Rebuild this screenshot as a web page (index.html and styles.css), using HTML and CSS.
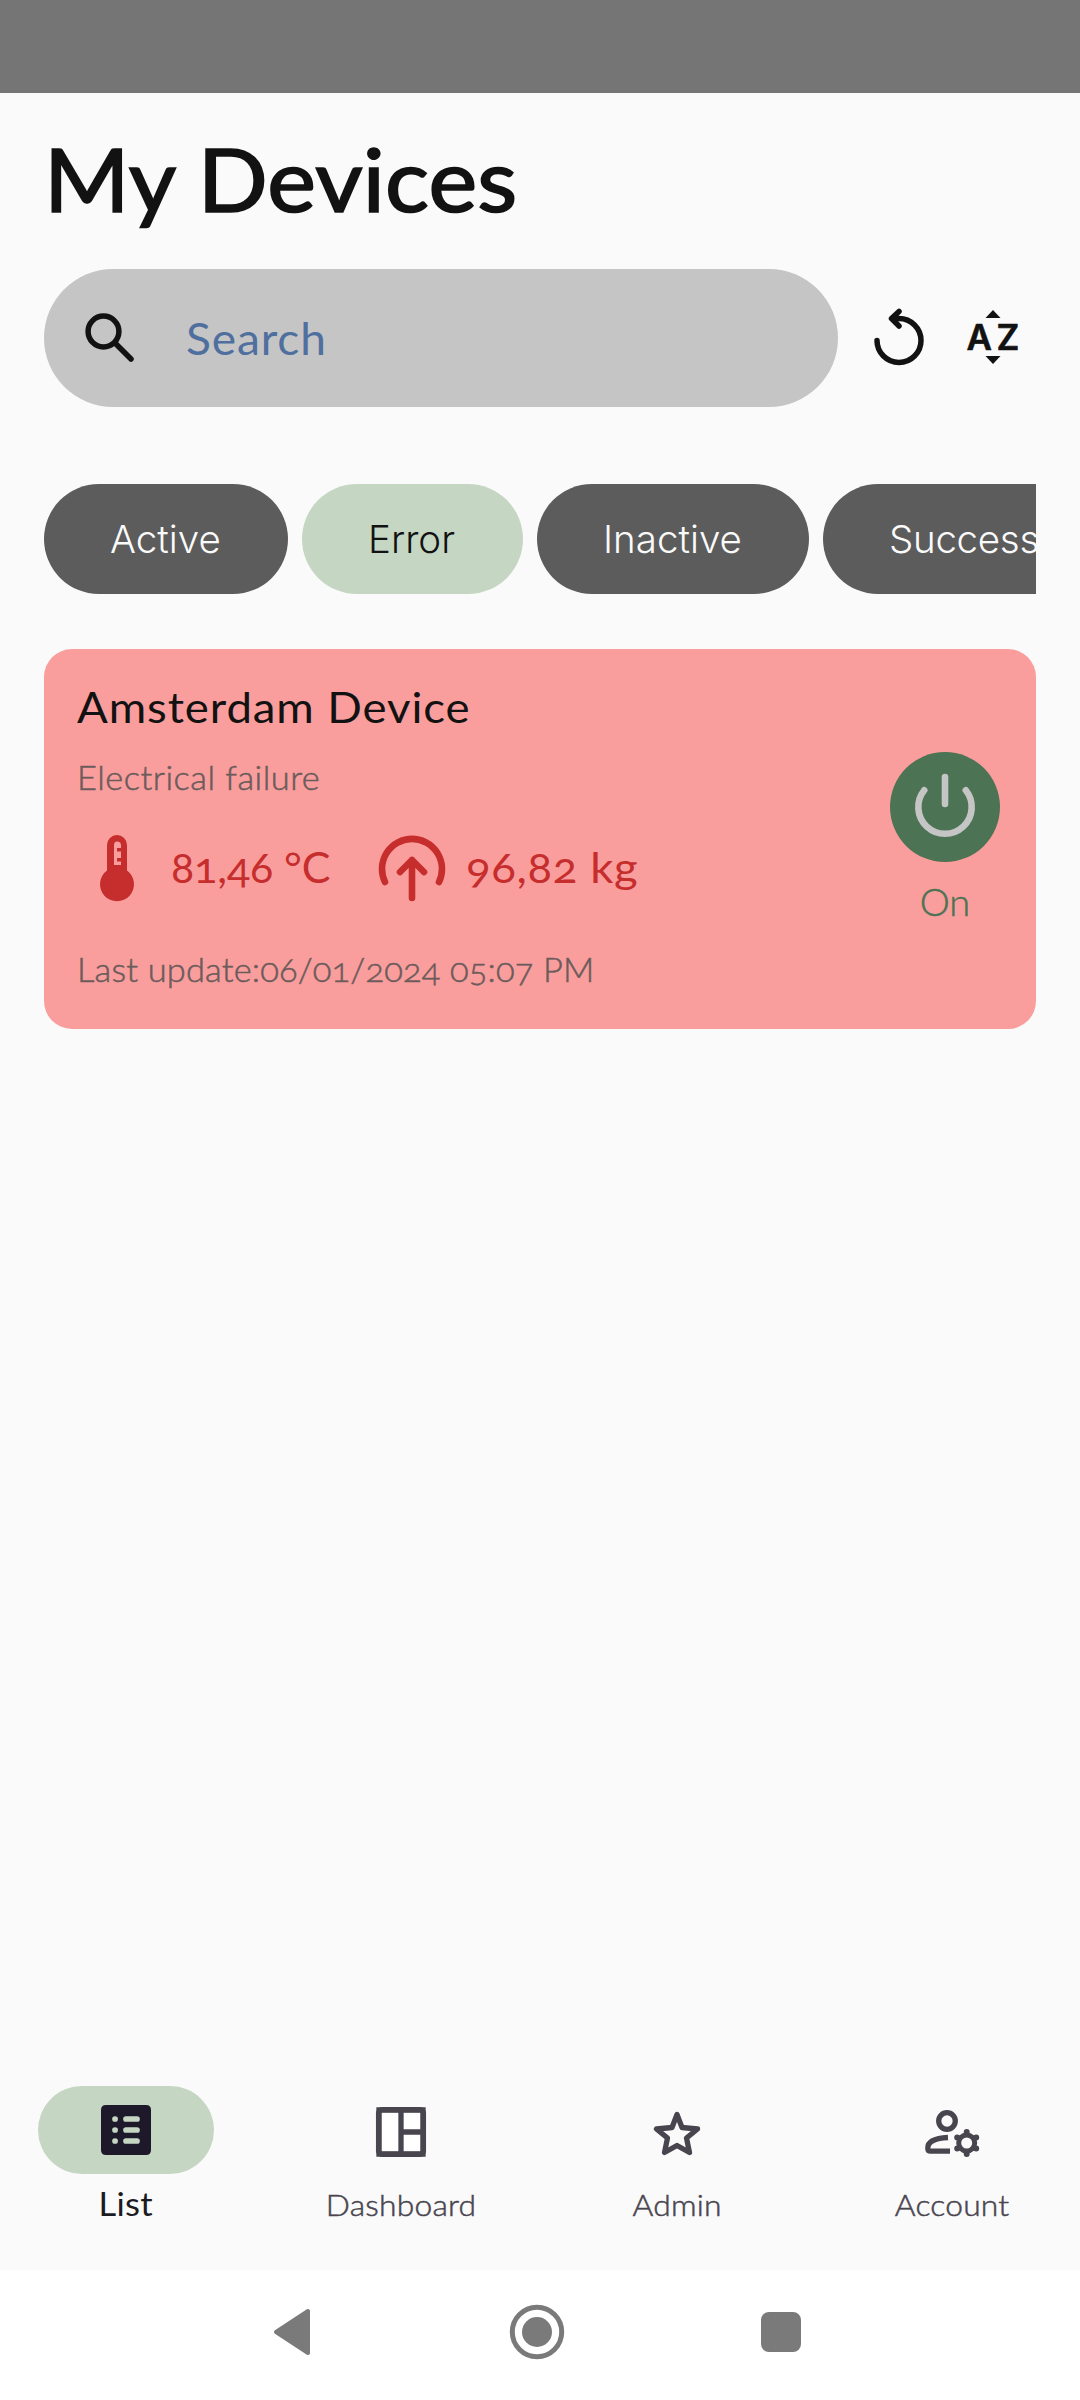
FILE: index.html
```html
<!DOCTYPE html>
<html lang="en">
<head>
<meta charset="utf-8">
<title>My Devices</title>
<link rel="stylesheet" href="styles.css">
</head>
<body>
<div class="screen">
  <div class="status-bar"></div>
  <main class="content">
    <h1 class="title">My Devices</h1>
    <div class="toolbar">
      <label class="search">
        <svg class="search-icon" viewBox="0 0 50 50"><circle cx="18.5" cy="18.5" r="15.4"/><path d="M30 30 46 46"/></svg>
        <span class="search-text">Search</span>
      </label>
      <svg class="refresh-icon" viewBox="0 0 52 60"><path d="M4 32.500A22 22 0 1 0 26 10.500H19M26 3.500 18.500 10.500 26 18"/></svg>
      <svg class="sort-icon" viewBox="0 0 56 60"><path d="M28 2 35.500 10H20.500ZM28 56 35.500 48H20.500Z"/><text x="1.500" y="42">A</text><text x="31.500" y="42">Z</text></svg>
    </div>
    <div class="chips">
      <span class="chip chip-active">Active</span>
      <span class="chip chip-error">Error</span>
      <span class="chip chip-inactive">Inactive</span>
      <span class="chip chip-success">Success</span>
    </div>
    <article class="card">
      <div class="info">
        <h2 class="device">Amsterdam Device</h2>
        <p class="reason">Electrical failure</p>
        <div class="metrics">
          <svg class="thermo-icon" viewBox="0 0 34 66"><path fill-rule="evenodd" d="M7 10a10 10 0 0 1 20 0V35.500A17 17 0 1 1 7 35.500ZM17 6.500q-3 0-3 4V30H21V26.500H17V23H21V16.500H17V13H21V10.500Q21 6.500 17 6.500Z"/></svg>
          <span class="temp">81,46 °C</span>
          <svg class="gauge-icon" viewBox="0 0 68 68"><path d="M7 48A30 30 0 1 1 61 48M34 64V26M22 38 34 26 46 38"/></svg>
          <span class="weight">96,82 kg</span>
        </div>
        <p class="updated">Last update:06/01/2024 05:07 PM</p>
      </div>
      <div class="switch">
        <svg class="power-icon" viewBox="0 0 110 110"><circle cx="55" cy="55" r="55"/><path d="M34.200 38.300A26.700 26.700 0 1 0 75.800 38.300M55 25V52"/></svg>
        <span class="state">On</span>
      </div>
    </article>
  </main>
  <nav class="tabs">
    <a class="tab tab-selected"><span class="pill"><svg class="tab-icon" viewBox="0 0 66 66"><path class="solid" fill-rule="evenodd" d="M13 8H53Q58 8 58 13V53Q58 58 53 58H13Q8 58 8 53V13Q8 8 13 8Z"/><path class="bullets" d="M22 22h.1M33 22H44M22 33h.1M33 33H44M22 44h.1M33 44H44"/></svg></span><span class="tab-label list-label">List</span></a>
    <a class="tab"><span class="pill"><svg class="tab-icon" viewBox="0 0 66 66"><path fill="#fff" d="M11 13H55V57H11Z"/><rect x="10.600" y="12.600" width="44.800" height="44.800" rx="3.500"/><path d="M33 12V58M33 35H55"/></svg></span><span class="tab-label dashboard-label">Dashboard</span></a>
    <a class="tab"><span class="pill"><svg class="tab-icon" viewBox="0 0 66 66"><path class="star" d="M33 17.500 38 30.500 53.500 32 42.500 41 45.500 55.500 33 48.500 20.500 55.500 23.500 41 12.500 32 28 30.500Z"/></svg></span><span class="tab-label admin-label">Admin</span></a>
    <a class="tab"><span class="pill"><svg class="tab-icon" viewBox="0 0 66 66"><circle cx="28" cy="24" r="8.300"/><path d="M29 40.500Q8.800 41.500 8.800 51Q8.800 54.200 11.500 54.200H31"/><circle class="gear-ring" cx="47.700" cy="46" r="8"/><path class="gear-teeth" d="M47.700 35v.1M57.200 40.500v.1M57.200 51.500v.1M47.700 57v.1M38.200 51.500v.1M38.200 40.500v.1"/></svg></span><span class="tab-label account-label">Account</span></a>
  </nav>
  <footer class="system-bar">
    <svg class="back" viewBox="0 0 38 48"><path d="M35 3V45L3 24Z"/></svg>
    <svg class="home" viewBox="0 0 56 56"><circle class="home-ring" cx="28" cy="28" r="24.700"/><circle cx="28" cy="28" r="15"/></svg>
    <span class="recent"></span>
  </footer>
</div>
</body>
</html>
```

FILE: styles.css
```css
* { box-sizing: border-box; margin: 0; padding: 0; }
body { font-family: Lato, "Noto Sans", sans-serif; color: #121212; background: #fafafa; }
svg { display: block; flex: none; overflow: visible; }
.screen { width: 1080px; height: 2400px; display: flex; flex-direction: column; background: #fafafa; overflow: hidden; }
.status-bar { height: 93px; flex: none; background: #757575; }
.content { flex: 1; padding: 34px 44px 0; }
.title, .search-text, .device, .reason, .updated, .weight { transform: scaleX(1.06); transform-origin: left center; }
.title { height: 104px; line-height: 104px; font-size: 87px; font-weight: 400; -webkit-text-stroke: 1.700px #121212; letter-spacing: .1px; white-space: nowrap; }
.toolbar { margin-top: 38px; height: 138px; display: flex; align-items: center; }
.search { width: 794px; height: 138px; border-radius: 69px; background: #c5c5c5; display: flex; align-items: center; padding-left: 41px; }
.search-icon { width: 50px; height: 50px; fill: none; stroke: #121212; stroke-width: 5.500; stroke-linecap: round; }
.search-text { margin-left: 51px; font-size: 43.500px; line-height: 54px; letter-spacing: .8px; color: #4f6f9f; }
.refresh-icon { width: 52px; height: 60px; margin-left: 35px; fill: none; stroke: #121212; stroke-width: 5.500; stroke-linecap: round; stroke-linejoin: round; }
.sort-icon { width: 56px; height: 60px; margin-left: 40px; fill: #121212; }
.sort-icon text { font: 600 35px Inter, sans-serif; stroke: #121212; stroke-width: .6; stroke-linejoin: round; }
.chips { margin-top: 77px; height: 110px; display: flex; gap: 14px; overflow: hidden; }
.chip { flex: none; height: 110px; border-radius: 55px; line-height: 110px; padding-left: 66px; background: #5c5c5c; color: #fafafa; font-family: Inter, sans-serif; font-weight: 300; font-size: 38.500px; white-space: nowrap; }
.chip-active { width: 244px; }
.chip-error { width: 221px; background: #c5d7c3; color: #121212; }
.chip-inactive { width: 272px; }
.chip-success { width: 277px; letter-spacing: -.3px; }
.card { margin-top: 55px; height: 380px; border-radius: 28px; background: #fa9e9d; display: flex; justify-content: space-between; padding: 31px 36px 0 33px; }
.device { height: 54px; line-height: 54px; font-size: 43px; font-weight: 400; letter-spacing: .85px; white-space: nowrap; }
.reason, .updated { height: 40px; line-height: 40px; font-size: 32.500px; font-weight: 300; -webkit-text-stroke: .5px #6c5b5b; color: #6c5b5b; white-space: nowrap; font-variant-numeric: oldstyle-nums; }
.reason { margin-top: 24px; letter-spacing: .45px; }
.metrics { margin-top: 37px; height: 66px; display: flex; align-items: center; color: #c62d2d; font-size: 43px; line-height: 54px; font-variant-numeric: oldstyle-nums; white-space: nowrap; }
.thermo-icon { width: 34px; height: 66px; margin-left: 23px; fill: #c62d2d; }
.temp { width: 207px; margin: -3px 0 0 37px; letter-spacing: -.1px; }
.gauge-icon { width: 68px; height: 68px; fill: none; stroke: #c62d2d; stroke-width: 6.600; stroke-linecap: round; stroke-linejoin: round; }
.weight { margin: -3px 0 0 20px; letter-spacing: .6px; }
.updated { margin-top: 49px; letter-spacing: .15px; }
.switch { width: 110px; padding-top: 72px; display: flex; flex-direction: column; align-items: center; }
.power-icon { width: 110px; height: 110px; fill: #4c7353; }
.power-icon path { fill: none; stroke: #c5c5c5; stroke-width: 6.600; stroke-linecap: round; }
.state { margin-top: 15px; line-height: 48px; font-size: 38px; font-weight: 300; color: #4c7353; -webkit-text-stroke: .5px #4c7353; }
.tabs { height: 184px; flex: none; display: flex; gap: 22px; padding-right: 1px; margin-left: -1px; }
.tab { flex: 1; display: flex; flex-direction: column; align-items: center; }
.pill { width: 176px; height: 88px; border-radius: 44px; display: flex; align-items: center; justify-content: center; }
.tab-selected .pill { background: #c5d7c3; }
.tab-icon { width: 66px; height: 66px; fill: none; stroke: #49454f; stroke-width: 5.300; }
.tab-icon .solid { fill: #1d192b; stroke: none; }
.tab-icon .bullets { stroke: #c5d7c3; stroke-width: 5.700; stroke-linecap: round; }
.tab-icon .star { stroke-linejoin: round; }
.gear-ring { stroke-width: 5; }
.gear-teeth { stroke-width: 6; stroke-linecap: round; }
.tab-label { margin-top: 10px; height: 40px; line-height: 40px; font-size: 30px; font-weight: 300; -webkit-text-stroke: .5px #49454f; letter-spacing: .2px; color: #49454f; white-space: nowrap; transform: scaleX(1.06); }
.list-label { font-size: 32.500px; font-weight: 400; letter-spacing: .3px; color: #1c1b1f; -webkit-text-stroke: 0; }
.system-bar { height: 130px; flex: none; background: #fff; display: flex; align-items: center; padding: 0 0 6px 273px; }
.back { width: 38px; height: 48px; fill: #7a7a7a; stroke: #7a7a7a; stroke-width: 4; stroke-linejoin: round; }
.home { width: 56px; height: 56px; margin-left: 198px; fill: #7a7a7a; }
.home-ring { fill: none; stroke: #7a7a7a; stroke-width: 5; }
.recent { width: 40px; height: 40px; border-radius: 8px; margin-left: 196px; background: #7a7a7a; }
```
